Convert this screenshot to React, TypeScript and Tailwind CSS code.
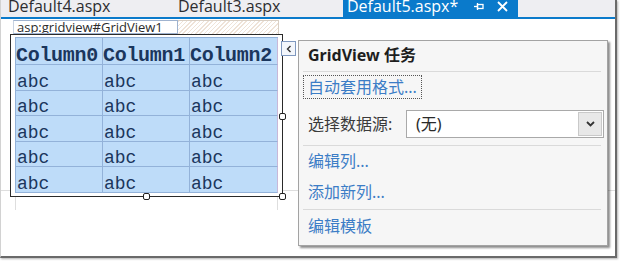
import React from "react";

const rows = ["abc", "abc", "abc", "abc", "abc"];
const rowHeights = ["h-[26px]", "h-[25px]", "h-[26px]", "h-[25px]", "h-[26px]"];

function Cell({ children, last, cls }: { children: React.ReactNode; last?: boolean; cls: string }) {
  return (
    <div
      className={`${cls} flex items-end border-b border-r ${last ? "border-r-[#c9b8d8]" : "border-r-[#93b2d9]"} border-b-[#93b2d9] bg-[#bedcf9] overflow-hidden`}
    >
      {children}
    </div>
  );
}

export default function App() {
  return (
    <div className="w-[621px] h-[261px] bg-white overflow-hidden">
      <div className="relative w-[617px] h-[258px] flex flex-col bg-white border-l border-l-[#d2d2d2] border-r-2 border-r-[#6a6a6a] border-b-2 border-b-[#6a6a6a] shadow-[1px_1px_2px_rgba(0,0,0,0.3)]">
        {/* Tab bar */}
        <div className="h-[17px] shrink-0 flex bg-[#eeeef2] font-['Open_Sans',sans-serif] text-[16px] leading-[17px] overflow-hidden">
          <div className="w-[170px] pl-[7px] text-[#2d2d30]">
            <span className="block mt-[-2px]">Default4.aspx</span>
          </div>
          <div className="w-[172px] pl-[7px] text-[#2d2d30]">
            <span className="block mt-[-2px]">Default3.aspx</span>
          </div>
          <div className="w-[175px] pl-[4px] pr-[10px] bg-[#0a7acb] text-white flex items-start">
            <span className="block mt-[-2px]">Default5.aspx*</span>
            <div className="ml-auto flex items-center h-[17px] gap-[13px] pb-[4px]">
              <svg width="10" height="9" viewBox="0 0 10 9" fill="none" stroke="white" strokeWidth="1.3">
                <path d="M0 4.5H3.5" />
                <path d="M3.5 1V8" />
                <rect x="3.5" y="2.5" width="5.5" height="4" />
              </svg>
              <svg width="11" height="11" viewBox="0 0 11 11" fill="none" stroke="white" strokeWidth="1.8">
                <path d="M1 1L10 10M10 1L1 10" />
              </svg>
            </div>
          </div>
        </div>
        <div className="h-[2px] shrink-0 bg-[#0a7acb]" />

        {/* Design surface */}
        <div className="relative flex-1 pl-[9px] pt-[1px]">
          {/* faint underlying page lines */}
          <div className="absolute left-0 right-0 top-[171px] h-px bg-[#dedede]" />
          <div className="absolute left-[14px] top-[178px] w-px h-[13px] bg-[#dedede]" />
          <div className="absolute left-[276px] top-[178px] w-px h-[13px] bg-[#dedede]" />

          <div className="relative flex h-[14px]">
            <div className="ml-[3px] w-[165px] h-[14px] border border-[#9fb3cf] border-l-[#c8d3e2] bg-white font-['Open_Sans',sans-serif] text-[13px] leading-[12px] text-[#2b2b2b] pl-[3px] whitespace-nowrap overflow-hidden">
              asp:gridview#GridView1
            </div>
            <div className="w-[101px] h-[14px] border-t border-r border-[#d9cfc4] bg-[repeating-linear-gradient(135deg,#efe3d8_0px,#efe3d8_1px,#ffffff_1px,#ffffff_3px)]" />
          </div>

          {/* Selection frame */}
          <div className="relative w-[273px] h-[163px] border border-[#2a2a2a] bg-white">
            <div className="ml-[4px] mt-[2px] w-[263px] border-l border-t border-[#93b2d9] grid grid-cols-[87px_87px_88px] text-[#1b365d] font-['Liberation_Mono',monospace]">
              {["Column0", "Column1", "Column2"].map((c, i) => (
                <Cell key={c} last={i === 2} cls="h-[27px]">
                  <span className="text-[20px] font-bold leading-[16px] tracking-[-0.3px]">{c}</span>
                </Cell>
              ))}
              {rows.map((r, ri) =>
                [0, 1, 2].map((ci) => (
                  <Cell key={`${ri}-${ci}`} last={ci === 2} cls={rowHeights[ri]}>
                    <span className="text-[18px] leading-[16px] pl-[1px]">{r}</span>
                  </Cell>
                ))
              )}
            </div>

            {/* handles */}
            <div className="absolute left-[132px] top-[158px] w-[7px] h-[7px] bg-white border border-[#222] rounded-[2px]" />
            <div className="absolute left-[268px] top-[158px] w-[7px] h-[7px] bg-white border border-[#222] rounded-[2px]" />
            <div className="absolute left-[268px] top-[78px] w-[7px] h-[7px] bg-white border border-[#222] rounded-[2px]" />

            {/* smart tag button */}
            <div className="absolute left-[270px] top-[6px] w-[15px] h-[15px] border border-[#7f98bf] bg-[#f3f6fb] flex items-center justify-center">
              <svg width="6" height="8" viewBox="0 0 6 8" fill="none" stroke="#333" strokeWidth="1.4">
                <path d="M4.5 1L1.5 4L4.5 7" />
              </svg>
            </div>
          </div>
        </div>

        {/* Smart tag panel */}
        <div className="absolute left-[297px] top-[40px] w-[310px] h-[206px] border border-[#a3a3a3] bg-[#f6f6f6] shadow-[2px_2px_2px_rgba(0,0,0,0.45)] flex flex-col font-['Noto_Sans','Noto_Sans_CJK_SC',sans-serif]">
          <div className="h-[30px] pl-[9px] flex items-center pb-[2px] text-[16px] font-bold text-[#1e1e1e]">
            GridView 任务
          </div>
          <div className="ml-[4px] mr-[6px] h-px bg-[#dadada]" />
          <div className="mt-[3px] ml-[4px] w-fit h-[24px] px-[4px] border border-dotted border-[#555] flex items-center text-[16px] text-[#3c7dc6]">
            自动套用格式...
          </div>
          <div className="mt-[11px] flex items-center h-[28px] pl-[9px] pr-[3px]">
            <span className="text-[16px] text-[#3a3a3a]">选择数据源:</span>
            <div className="ml-auto w-[198px] h-[28px] border border-[#a9a9a9] bg-white flex items-center pl-[9px] pr-[1px]">
              <span className="text-[16px] text-[#2a2a2a]">(无)</span>
              <div className="ml-auto w-[24px] h-[24px] border border-[#c9c9c9] bg-[#e8e8e8] flex items-center justify-center">
                <svg width="9" height="6" viewBox="0 0 9 6" fill="none" stroke="#333" strokeWidth="1.8">
                  <path d="M1 1L4.5 4.5L8 1" />
                </svg>
              </div>
            </div>
          </div>
          <div className="mt-[7px] ml-[4px] mr-[6px] h-px bg-[#dadada]" />
          <div className="mt-[3px] pl-[9px] h-[24px] flex items-center text-[16px] text-[#3c7dc6]">编辑列...</div>
          <div className="mt-[7px] pl-[9px] h-[24px] flex items-center text-[16px] text-[#3c7dc6]">添加新列...</div>
          <div className="mt-[5px] ml-[4px] mr-[6px] h-px bg-[#dadada]" />
          <div className="mt-[4px] pl-[9px] h-[24px] flex items-center text-[16px] text-[#3c7dc6]">编辑模板</div>
        </div>
      </div>
    </div>
  );
}
